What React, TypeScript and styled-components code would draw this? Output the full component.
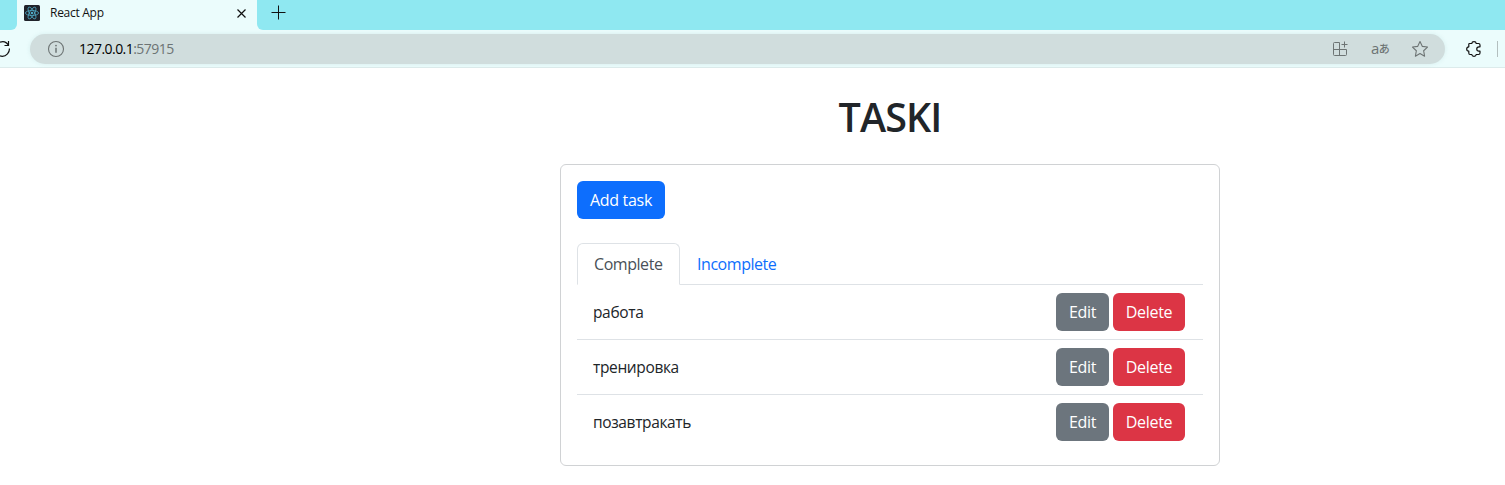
import React from "react";
import styled, { createGlobalStyle } from "styled-components";

const GlobalStyle = createGlobalStyle`
  *, *::before, *::after { box-sizing: border-box; }
  html, body { margin: 0; height: 100%; overflow: hidden; }
  body {
    background: #fff;
    color: #212529;
    font-family: "Segoe UI", "Open Sans", "Noto Sans", sans-serif;
    font-size: 16px;
    line-height: 24px;
  }
  button { font-family: inherit; }
`;

const Page = styled.div`
  width: 1505px;
  height: 485px;
  overflow: hidden;
`;

const TabStrip = styled.div`
  display: flex;
  height: 30px;
  background: #ebfcfc;
`;

const StripStart = styled.div`
  width: 17px;
  background: #8fe8f1;
  border-bottom-right-radius: 6px;
`;

const BrowserTab = styled.div`
  display: flex;
  align-items: center;
  width: 240px;
  padding: 0 10px 4px 7px;
`;

const TabTitle = styled.span`
  flex: 1;
  margin-left: 10px;
  color: #111;
  font-size: 12px;
  line-height: 16px;
  letter-spacing: -0.28px;
`;

const StripRest = styled.div`
  display: flex;
  flex: 1;
  padding: 5px 0 0 14px;
  background: #8fe8f1;
  border-bottom-left-radius: 6px;
`;

const Toolbar = styled.div`
  display: flex;
  align-items: center;
  height: 38px;
  background: #ebfcfc;
  border-bottom: 1px solid #dcebeb;
`;

const ReloadSlot = styled.div`
  display: flex;
  width: 30px;
`;

const AddressBar = styled.div`
  display: flex;
  align-items: center;
  width: 1415px;
  height: 30px;
  padding: 0 16px 0 17px;
  border-radius: 15px;
  background: #d0dddd;
  color: #6d7474;
  box-shadow: 0 0 4px rgba(120, 170, 170, 0.18);
`;

const Address = styled.span`
  flex: 1;
  margin-left: 14px;
  font-size: 14px;
  letter-spacing: -0.54px;
`;

const Host = styled.span`
  color: #000;
`;

const AddressActions = styled.div`
  display: flex;
  align-items: center;
  gap: 22px;
  height: 24px;
`;

const Translate = styled.span`
  display: flex;
  align-items: center;
  width: 18px;
  height: 18px;
  padding-bottom: 2px;
  font-size: 15px;
  letter-spacing: -0.6px;
  line-height: 16px;
  white-space: nowrap;
`;

const Kana = styled.span`
  padding-top: 1px;
  font-family: "Noto Sans CJK JP", sans-serif;
  font-size: 11px;
  font-weight: 500;
`;

const ToolbarEnd = styled.div`
  display: flex;
  align-items: center;
  margin-left: 20px;
  gap: 14px;
`;

const Divider = styled.div`
  width: 1px;
  height: 16px;
  background: #b3bfbf;
`;

const Main = styled.main`
  width: 660px;
  margin-left: 560px;
  padding-top: 25px;
`;

const Title = styled.h1`
  margin: 0 0 23px;
  font-size: 39.5px;
  font-weight: 600;
  line-height: 48px;
  letter-spacing: -0.9px;
  text-align: center;
`;

const Card = styled.section`
  height: 302px;
  padding: 16px;
  border: 1px solid #d0d2d4;
  border-radius: 6px;
`;

const tones = { primary: "#0d6efd", secondary: "#6c757d", danger: "#dc3545" };

const Button = styled.button<{ $tone: keyof typeof tones; $width: number }>`
  width: ${(p) => p.$width}px;
  height: 38px;
  padding: 0;
  border: 0;
  border-radius: 6px;
  background: ${(p) => tones[p.$tone]};
  color: #fff;
  font-size: 16px;
  line-height: 24px;
  letter-spacing: -0.3px;
  white-space: nowrap;
`;

const Tabs = styled.nav`
  display: flex;
  height: 42px;
  margin-top: 24px;
  border-bottom: 1px solid #dee2e6;
`;

const Tab = styled.a<{ $active?: boolean }>`
  height: 42px;
  width: ${(p) => (p.$active ? 103 : 112)}px;
  padding: 8px 0 0 16px;
  border: 1px solid ${(p) => (p.$active ? "#dee2e6" : "transparent")};
  border-bottom-color: ${(p) => (p.$active ? "#fff" : "transparent")};
  border-radius: 6px 6px 0 0;
  color: ${(p) => (p.$active ? "#495057" : "#0d6efd")};
  letter-spacing: -0.45px;
`;

const Row = styled.div`
  display: flex;
  align-items: center;
  height: 55px;
  padding: 0 18px 0 16px;
  border-bottom: 1px solid #dee2e6;
  &:last-child { border-bottom-color: transparent; }
`;

const TaskName = styled.span`
  flex: 1;
  font-size: 15.5px;
  letter-spacing: -0.36px;
`;

const RowActions = styled.div`
  display: flex;
  gap: 4px;
`;

const ReactLogo = () => (
  <svg width="16" height="16" viewBox="0 0 16 16">
    <rect width="16" height="16" rx="1.5" fill="#20232a" />
    <g fill="none" stroke="#4fa9c4" strokeWidth="0.8">
      <ellipse cx="8" cy="8" rx="6.6" ry="2.5" />
      <ellipse cx="8" cy="8" rx="6.6" ry="2.5" transform="rotate(60 8 8)" />
      <ellipse cx="8" cy="8" rx="6.6" ry="2.5" transform="rotate(120 8 8)" />
    </g>
    <circle cx="8" cy="8" r="1.3" fill="#4fa9c4" />
  </svg>
);

const CloseIcon = () => (
  <svg width="11" height="11" viewBox="0 0 11 11" stroke="#111" strokeWidth="1.2">
    <path d="M1.5 1.5l8 8M9.5 1.5l-8 8" />
  </svg>
);

const PlusIcon = () => (
  <svg width="15" height="15" viewBox="0 0 15 15" stroke="#111" strokeWidth="1">
    <path d="M.5 7.5h14M7.5 .5v14" />
  </svg>
);

const ReloadIcon = () => (
  <svg width="11" height="18" viewBox="0 0 11 18" fill="none" stroke="#111" strokeWidth="1.2">
    <path d="M0 2.2C3.5 .9 6.7 2.2 8.5 5.5M9.4 8.5C9.6 12.5 6.5 16.3 2.2 16.3C1.4 16.3 .7 16.2 0 15.9M8.5 1v4.5H4.5" />
  </svg>
);

const InfoIcon = () => (
  <svg width="18" height="18" viewBox="0 0 18 18" fill="none" stroke="currentColor" strokeWidth="1.1">
    <circle cx="9" cy="9" r="7.5" />
    <path d="M9 7.8v5" strokeWidth="1.5" />
    <circle cx="9" cy="5.6" r=".9" fill="currentColor" stroke="none" />
  </svg>
);

const AppsIcon = () => (
  <svg width="18" height="18" viewBox="0 0 18 18" fill="none" stroke="currentColor" strokeWidth="1">
    <path d="M8.5 2.5h-5a1 1 0 0 0-1 1v11a1 1 0 0 0 1 1h11a1 1 0 0 0 1-1v-5h-13M8.5 2.5v13M13.5 1.5v6M10.5 4.5h6" />
  </svg>
);

const StarIcon = () => (
  <svg width="18" height="18" viewBox="0 0 18 18" fill="none" stroke="currentColor" strokeWidth="1.1" strokeLinejoin="round">
    <path d="M9 1.5l2.25 4.85 5.25 .7-3.85 3.7 .95 5.45L9 13.6l-4.6 2.6 .95-5.45L1.5 7.05l5.25-.7z" />
  </svg>
);

const ExtensionIcon = () => (
  <svg width="18" height="18" viewBox="0 0 18 18" fill="none" stroke="#111" strokeWidth="1.2" strokeLinejoin="round">
    <path d="M4.5 3.5H6.8C7 1 11 1 11.2 3.5H13.5Q15 3.5 15 5V6.8H14C11 6.8 11 11.2 14 11.2H15V13Q15 14.5 13.5 14.5H11.2C11 17 7 17 6.8 14.5H5Q3.8 14.5 3.8 13V11.2C1 11 1 7 3.8 6.8V4.3Q3.8 3.5 4.5 3.5Z" />
  </svg>
);

const tasks = ["работа", "тренировка", "позавтракать"];

export default function App() {
  return (
    <Page>
      <GlobalStyle />
      <TabStrip>
        <StripStart />
        <BrowserTab>
          <ReactLogo />
          <TabTitle>React App</TabTitle>
          <CloseIcon />
        </BrowserTab>
        <StripRest><PlusIcon /></StripRest>
      </TabStrip>
      <Toolbar>
        <ReloadSlot><ReloadIcon /></ReloadSlot>
        <AddressBar>
          <InfoIcon />
          <Address><Host>127.0.0.1</Host>:57915</Address>
          <AddressActions>
            <AppsIcon />
            <Translate>a<Kana>あ</Kana></Translate>
            <StarIcon />
          </AddressActions>
        </AddressBar>
        <ToolbarEnd>
          <ExtensionIcon />
          <Divider />
        </ToolbarEnd>
      </Toolbar>
      <Main>
        <Title>TASKI</Title>
        <Card>
          <Button $tone="primary" $width={88}>Add task</Button>
          <Tabs>
            <Tab $active>Complete</Tab>
            <Tab>Incomplete</Tab>
          </Tabs>
          <div>
            {tasks.map((task) => (
              <Row key={task}>
                <TaskName>{task}</TaskName>
                <RowActions>
                  <Button $tone="secondary" $width={53}>Edit</Button>
                  <Button $tone="danger" $width={72}>Delete</Button>
                </RowActions>
              </Row>
            ))}
          </div>
        </Card>
      </Main>
    </Page>
  );
}
